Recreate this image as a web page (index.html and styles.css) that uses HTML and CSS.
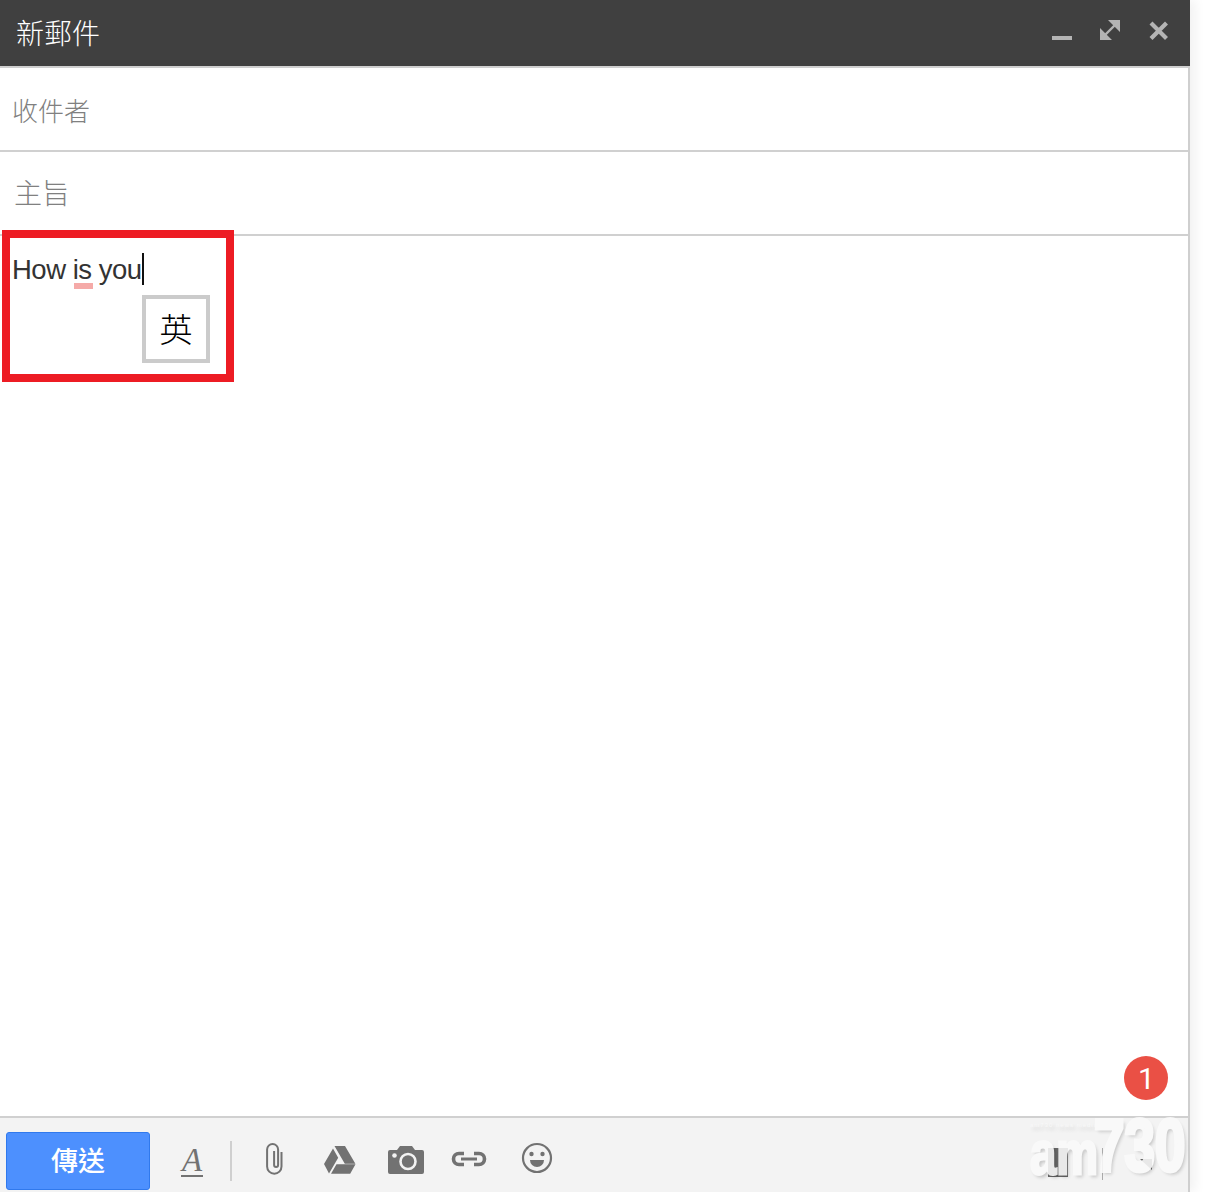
FILE: index.html
```html
<!DOCTYPE html>
<html lang="zh-Hant">
<head>
<meta charset="utf-8">
<title>新郵件</title>
<link rel="stylesheet" href="styles.css">
</head>
<body>
<div class="compose">
  <header class="head">
    <span class="title">新郵件</span>
    <div class="controls">
      <svg class="ctl" width="22" height="22" viewBox="0 0 22 22"><rect x="0" y="16" width="20" height="4" fill="#b4b4b4"/></svg>
      <svg class="ctl" width="22" height="22" viewBox="0 0 22 22"><path d="M8 0h12v12zM0 20V8l12 12z" fill="#b4b4b4"/><path d="M4 16L16 4" stroke="#b4b4b4" stroke-width="2.400" fill="none"/></svg>
      <svg class="ctl" width="22" height="22" viewBox="0 0 22 22"><path d="M3 3l15.500 15.500M18.500 3L3 18.500" stroke="#b4b4b4" stroke-width="4.200" fill="none"/></svg>
    </div>
  </header>
  <div class="row row-to"><span>收件者</span></div>
  <div class="row row-subject"><span>主旨</span></div>
  <main class="body">
    <div class="marked">
      <div class="line"><span>How </span><span class="spell">is</span><span> you</span><span class="caret"></span></div>
      <div class="ime">英</div>
    </div>
    <div class="badge">1</div>
  </main>
  <footer class="foot">
    <button class="send">傳送</button>
    <div class="font-a">A</div>
    <div class="sep"></div>
    <svg class="tool clip" width="20" height="34" viewBox="0 0 20 34"><path d="M16.500 10v14.500a7.200 7.200 0 0 1-14.400 0V7.500a5.500 5.500 0 0 1 11 0V23a2 2 0 0 1-4 0V9" fill="none" stroke="#727272" stroke-width="2"/></svg>
    <svg class="tool drive" width="32" height="28" viewBox="0 0 32 28"><path d="M10.500 0h10.500l10.400 17.800H20.800zM9 2.500l5.200 9.200L5 27.400 0 18zM7 27.700l5.500-9.500h19l-5.300 9.500z" fill="#727272"/></svg>
    <svg class="tool camera" width="36" height="28" viewBox="0 0 36 28"><path d="M2 4h7l3-4h12l3 4h7a2 2 0 0 1 2 2v20a2 2 0 0 1-2 2H2a2 2 0 0 1-2-2V6a2 2 0 0 1 2-2z" fill="#727272"/><circle cx="20" cy="15.500" r="7.500" fill="none" stroke="#f3f3f3" stroke-width="2.600"/><circle cx="6.500" cy="9.500" r="2.300" fill="#f3f3f3"/></svg>
    <svg class="tool link" width="36" height="16" viewBox="0 0 36 16"><path d="M13 2.500H8a5.500 5.500 0 0 0 0 11h5M23 2.500h5a5.500 5.500 0 0 1 0 11h-5" fill="none" stroke="#727272" stroke-width="3.600"/><path d="M10 8h16" stroke="#727272" stroke-width="3"/></svg>
    <svg class="tool smile" width="32" height="32" viewBox="0 0 32 32"><circle cx="16" cy="16" r="14" fill="none" stroke="#727272" stroke-width="2.200"/><circle cx="10.500" cy="12" r="2.200" fill="#727272"/><circle cx="21.500" cy="12" r="2.200" fill="#727272"/><path d="M9 18h14a7 7 0 0 1-14 0z" fill="#727272"/></svg>
    <div class="foot-right">
      <div class="trash"></div>
      <div class="thin"></div>
      <div class="tip"></div>
    </div>
  </footer>
  <div class="watermark"><span class="wm-small">am730 news media</span><span class="wm-am">am</span><span class="wm-num">730</span></div>
</div>
</body>
</html>
```
FILE: styles.css
```css
* { box-sizing: border-box; }
html, body { margin: 0; padding: 0; background: #fff; }
body { width: 1208px; height: 1192px; overflow: hidden; font-family: "Liberation Sans", "Noto Sans CJK TC", sans-serif; }
.compose {
  position: relative;
  width: 1190px;
  height: 1192px;
  display: flex;
  flex-direction: column;
  border-right: 2px solid #cfcfcf;
  box-shadow: 6px 0 10px rgba(0,0,0,.05);
}
.head {
  height: 68px;
  margin-right: -2px;
  background: #404040;
  border-bottom: 2px solid #cfcfcf;
  display: flex;
  align-items: center;
  justify-content: space-between;
  padding: 0 21px 0 16px;
  flex: none;
}
.title { color: #fff; font-size: 28px; font-family: "Noto Sans CJK TC", sans-serif; font-weight: 300; line-height: 66px; padding-bottom: 2px; }
.controls { display: flex; gap: 26px; margin-top: -4px; margin-right: -1px; }
.ctl { display: block; }
.row {
  height: 84px;
  flex: none;
  border-bottom: 2px solid #d0d0d0;
  display: flex;
  align-items: center;
  color: #808080;
  font-family: "Noto Sans CJK TC", sans-serif;
  font-weight: 300;
}
.row-to { padding-left: 12px; font-size: 26px; padding-top: 1px; }
.row-subject { padding-left: 14px; font-size: 28px; padding-bottom: 3px; }
.body { flex: 1; position: relative; min-height: 0; }
.marked {
  position: absolute;
  left: 2px;
  top: -6px;
  width: 232px;
  height: 152px;
  border: 8px solid #ed1c24;
  background: #fff;
}
.line {
  position: absolute;
  left: 2px;
  top: 16px;
  display: flex;
  white-space: pre;
  font-size: 27.500px;
  letter-spacing: -.500px;
  line-height: 31px;
  color: #333;
}
.spell { position: relative; }
.spell::after {
  content: "";
  position: absolute;
  left: 1px;
  right: -1px;
  top: 29px;
  height: 6px;
  background: #f5aaa8;
}
.caret { width: 2px; height: 32px; margin-top: -1px; background: #111; }
.ime {
  position: absolute;
  left: 132px;
  top: 57px;
  width: 68px;
  height: 68px;
  border: 4px solid #cbcbcb;
  background: #fff;
  color: #000;
  display: flex;
  align-items: center;
  justify-content: center;
  font-size: 33px;
  padding-bottom: 3px;
  font-family: "Noto Sans CJK TC", sans-serif;
  font-weight: 300;
}
.badge {
  position: absolute;
  right: 20px;
  bottom: 16px;
  width: 44px;
  height: 44px;
  border-radius: 50%;
  background: #ea5045;
  color: #fff;
  font-family: "Roboto", sans-serif;
  font-size: 30px;
  line-height: 45px;
  text-align: center;
  padding-left: 1px;
}
.foot {
  height: 76px;
  flex: none;
  background: #f3f3f3;
  border-top: 2px solid #d0d0d0;
  display: flex;
  align-items: flex-start;
  padding: 14px 0 0 6px;
  position: relative;
}
.send {
  width: 144px;
  height: 58px;
  background: #4d90fe;
  border: 1px solid #3079ed;
  border-radius: 3px;
  color: #fff;
  font-size: 27px;
  font-weight: 500;
  font-family: "Noto Sans CJK TC", sans-serif;
  padding: 0 0 3px;
  line-height: 52px;
}
.font-a {
  margin: 10px 0 0 31px;
  width: 22px;
  height: 35px;
  font-family: "Liberation Serif", serif;
  font-style: italic;
  font-size: 33px;
  line-height: 37px;
  color: #727272;
  text-align: center;
  border-bottom: 2px solid #727272;
}
.sep { width: 2px; height: 40px; background: #cfcfcf; margin: 9px 0 0 27px; }
.tool { display: block; flex: none; }
.clip { margin: 10px 0 0 33px; }
.drive { margin: 14px 0 0 39px; }
.camera { margin: 14px 0 0 32px; }
.link { margin: 19px 0 0 27px; }
.smile { margin: 10px 0 0 34px; }
.foot-right { position: absolute; right: 0; top: 0; bottom: 0; width: 140px; }
.trash { position: absolute; left: 0; top: 30px; width: 20px; height: 29px; background: #666; }
.thin { position: absolute; left: 54px; top: 30px; width: 1px; height: 32px; background: #aaa; }
.tip { position: absolute; left: 92px; top: 41px; width: 0; height: 0; border-top: 11px solid #666; border-left: 12px solid transparent; }
.watermark {
  position: absolute;
  left: 1028px;
  top: 1114px;
  width: 160px;
  height: 66px;
  color: #fafafa;
  opacity: .88;
  text-shadow: 3px 3px 4px rgba(0,0,0,.22);
  font-family: "Liberation Sans", sans-serif;
  font-weight: 700;
}
.wm-small { position: absolute; left: 2px; top: 8px; font-size: 6px; line-height: 7px; font-weight: 400; white-space: nowrap; letter-spacing: 1px; }
.wm-am { position: absolute; left: 2px; top: 20px; font-size: 62px; line-height: 38px; white-space: nowrap; transform: scaleX(.76); transform-origin: left center; -webkit-text-stroke: 3px #fafafa; }
.wm-num { position: absolute; left: 66px; top: 5px; font-size: 74px; line-height: 54px; white-space: nowrap; transform: scaleX(.74); transform-origin: left center; -webkit-text-stroke: 4px #fafafa; }
```
